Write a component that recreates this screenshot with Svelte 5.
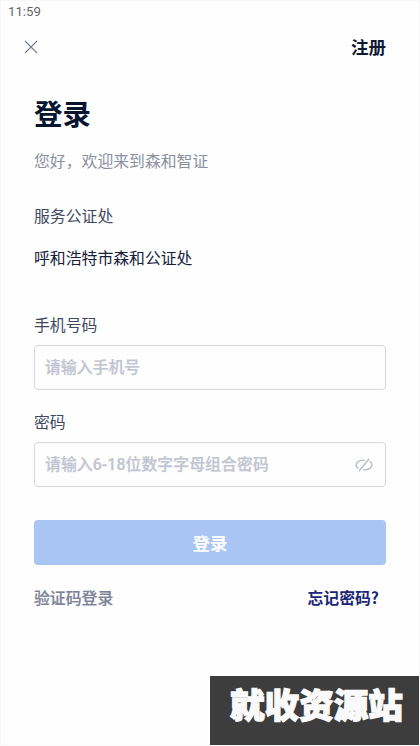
<script lang="ts">
	let phone = $state('');
	let password = $state('');
	let showPassword = $state(false);
</script>

<div class="screen">
	<div class="status-bar">11:59</div>

	<header class="nav">
		<button class="close" aria-label="关闭">
			<svg width="14" height="14" viewBox="0 0 14 14" fill="none" stroke="currentColor" stroke-width="1.1">
				<path d="M1 1 L13 13 M13 1 L1 13" />
			</svg>
		</button>
		<button class="register">注册</button>
	</header>

	<main>
		<h1>登录</h1>
		<p class="welcome">您好，欢迎来到森和智证</p>

		<section class="office">
			<p class="office-label">服务公证处</p>
			<p class="office-name">呼和浩特市森和公证处</p>
		</section>

		<label for="phone">手机号码</label>
		<div class="field">
			<input id="phone" type="tel" placeholder="请输入手机号" bind:value={phone} />
		</div>

		<label class="password-label" for="password">密码</label>
		<div class="field">
			<input
				id="password"
				type={showPassword ? 'text' : 'password'}
				placeholder="请输入6-18位数字字母组合密码"
				bind:value={password}
			/>
			<button class="eye" aria-label="显示密码" onclick={() => (showPassword = !showPassword)}>
				<svg
					width="18"
					height="14"
					viewBox="0 0 18 14"
					fill="none"
					stroke="currentColor"
					stroke-width="1.4"
					stroke-linecap="round"
				>
					<path d="M9.2 2.2 C5.2 1.9 2 3.8 1 7 C1.3 8.4 2 9.4 3 10.2" />
					<path d="M15 3.8 C16.1 4.6 16.8 5.7 17 7 C16 10.2 12.8 12.1 8.8 11.8" />
					<path d="M13.7 1.2 L4.3 12.8" />
				</svg>
			</button>
		</div>

		<button class="submit">登录</button>

		<div class="links">
			<button class="link">验证码登录</button>
			<button class="link forgot">忘记密码?</button>
		</div>
	</main>

	<div class="watermark">就收资源站</div>
</div>

<style>
	:global(body) {
		background: #fff;
	}

	.screen {
		position: relative;
		box-sizing: border-box;
		width: 420px;
		height: 746px;
		overflow: hidden;
		border: 1px solid #f8f8f8;
		background: #fefefe;
		font-family: Roboto, 'Noto Sans CJK SC', sans-serif;
		font-size: 15.85px;
		line-height: 24px;
		color: #414960;
	}

	button {
		padding: 0;
		border: 0;
		background: none;
		font: inherit;
		color: inherit;
	}

	h1,
	p {
		margin: 0;
	}

	.status-bar {
		height: 22px;
		padding-left: 7px;
		font-size: 13.2px;
		line-height: 22px;
		color: #666;
	}

	.nav {
		display: flex;
		align-items: center;
		justify-content: space-between;
		height: 48px;
		padding: 0 33px 0 23px;
	}

	.close {
		display: flex;
		color: #747b93;
	}

	.register {
		padding-top: 2px;
		font-size: 17.5px;
		font-weight: 700;
		color: #101a35;
	}

	main {
		padding: 25px 33px 0;
	}

	h1 {
		font-size: 28.5px;
		font-weight: 700;
		line-height: 40px;
		color: #08152f;
	}

	.welcome {
		margin-top: 14px;
		color: #8b90a0;
	}

	.office {
		display: flex;
		flex-direction: column;
		gap: 18px;
		margin: 31px 0 43px;
	}

	.office-name {
		color: #17213a;
	}

	label {
		display: block;
	}

	.password-label {
		margin-top: 21px;
	}

	.field {
		display: flex;
		align-items: center;
		box-sizing: border-box;
		height: 45px;
		margin-top: 7px;
		padding: 0 12px 0 10px;
		border: 1px solid #d3d6df;
		border-radius: 4px;
	}

	input {
		flex: 1;
		min-width: 0;
		padding: 0;
		border: 0;
		outline: 0;
		background: none;
		font: inherit;
		font-weight: 500;
		color: #17213a;
	}

	input::placeholder {
		color: #c2c5d1;
		opacity: 1;
		-webkit-text-stroke: 0.25px #c2c5d1;
	}

	#password::placeholder {
		letter-spacing: 0.08px;
	}

	.eye {
		display: flex;
		color: #b9bdca;
	}

	.submit {
		display: block;
		width: 100%;
		height: 45px;
		margin-top: 33px;
		padding-top: 2px;
		border-radius: 4px;
		background: #a9c5f4;
		font-size: 17.5px;
		font-weight: 700;
		color: #fff;
	}

	.links {
		display: flex;
		align-items: flex-start;
		justify-content: space-between;
		margin-top: 22px;
		padding-right: 7px;
	}

	.link {
		font-weight: 500;
		color: #7c8297;
		-webkit-text-stroke: 0.2px currentColor;
	}

	.forgot {
		font-family: 'Noto Sans CJK SC', sans-serif;
		font-weight: 700;
		line-height: 22px;
		color: #1c2679;
		-webkit-text-stroke: 0;
	}

	.watermark {
		position: absolute;
		right: -1px;
		bottom: 0;
		box-sizing: border-box;
		width: 210px;
		height: 69px;
		padding-left: 20px;
		background: #3d3d3d;
		font-size: 34.6px;
		font-weight: 900;
		line-height: 61px;
		white-space: nowrap;
		color: #fafafa;
		-webkit-text-stroke: 1.3px #fafafa;
	}
</style>
